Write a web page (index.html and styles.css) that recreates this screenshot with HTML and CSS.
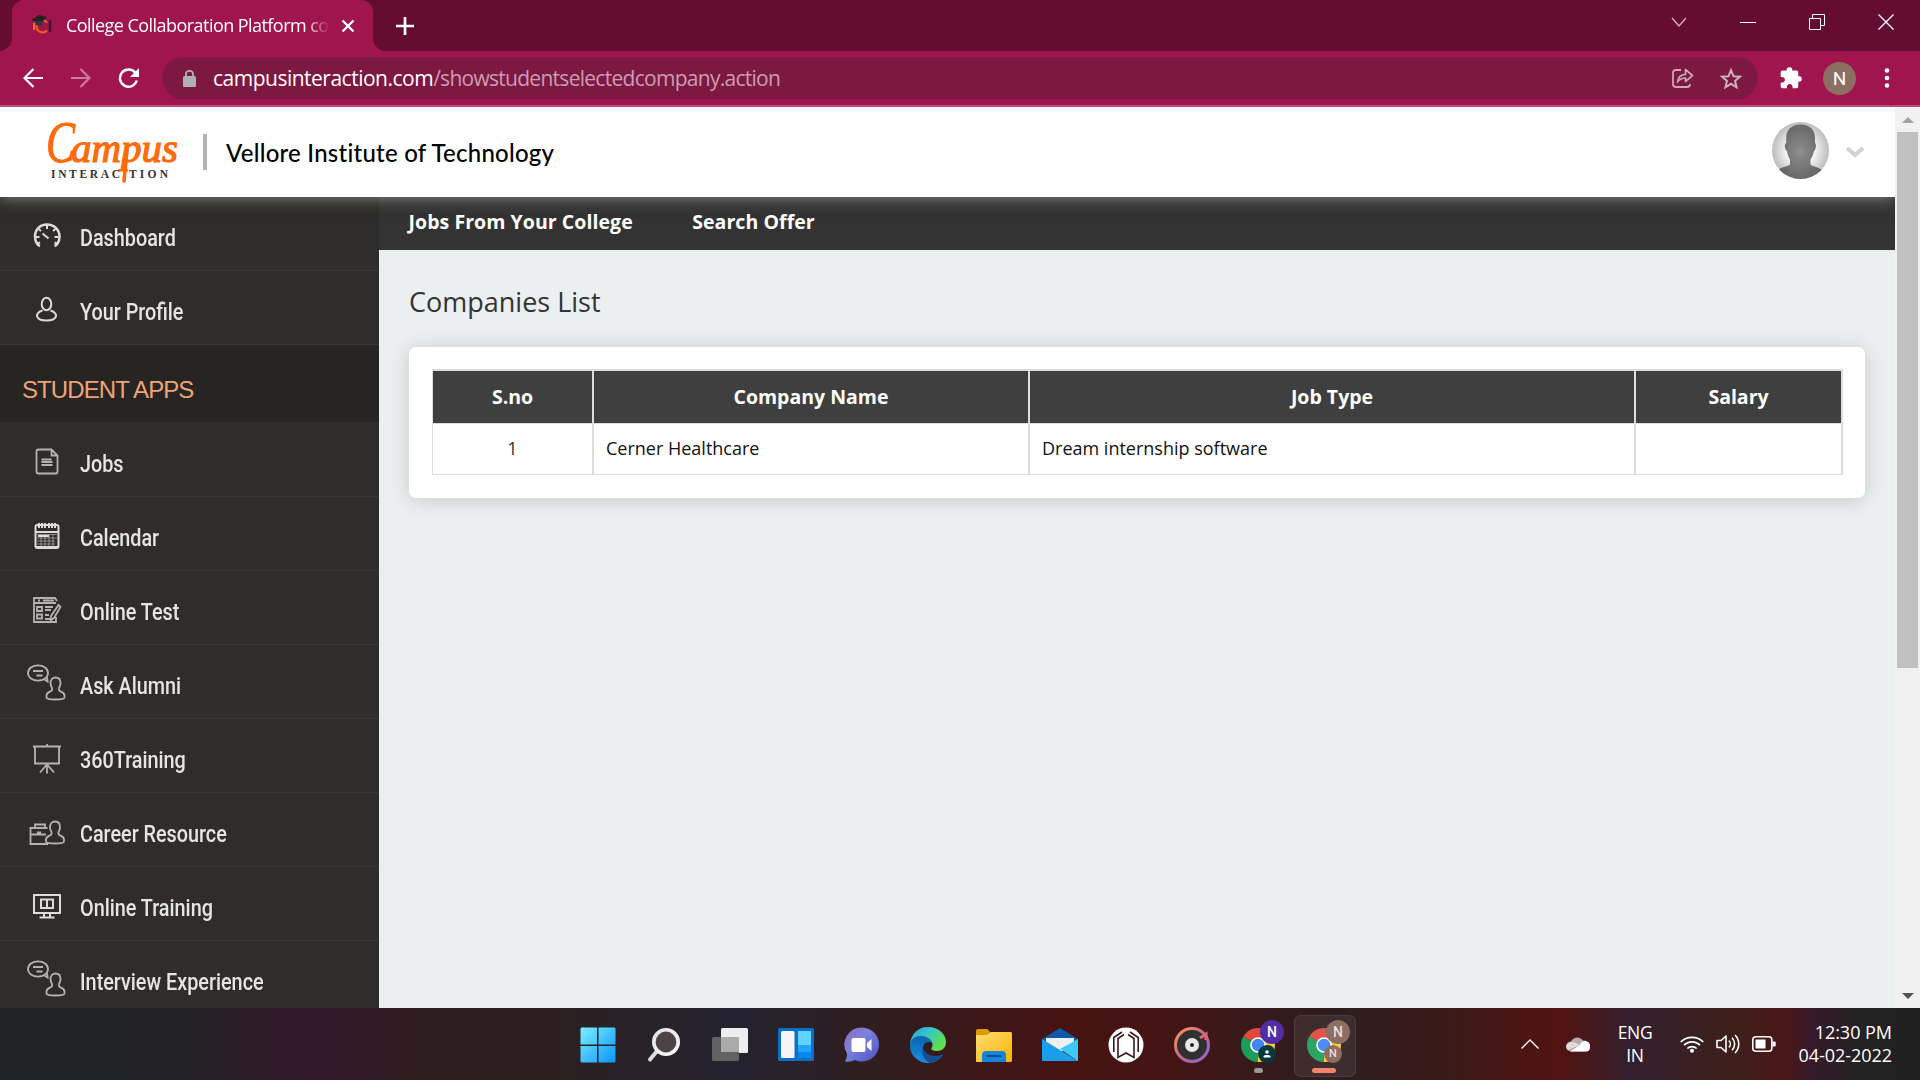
FILE: index.html
```html
<!DOCTYPE html>
<html lang="en">
<head>
<meta charset="utf-8">
<title>College Collaboration Platform</title>
<link rel="stylesheet" href="styles.css">
</head>
<body>
<svg class="defs" width="0" height="0" aria-hidden="true">
  <defs>
    <linearGradient id="winBlue" x1="0" y1="0" x2="1" y2="1"><stop offset="0" stop-color="#7cf0ff"/><stop offset="1" stop-color="#0a94ff"/></linearGradient>
    <linearGradient id="lensRim" x1="0" y1="0" x2="1" y2="1"><stop offset="0" stop-color="#e2e2e2"/><stop offset="1" stop-color="#f8f8f8"/></linearGradient>
    <linearGradient id="chatBg" x1="0" y1="0" x2="1" y2="1"><stop offset="0" stop-color="#8c6bb5"/><stop offset=".4" stop-color="#7b83dd"/><stop offset="1" stop-color="#4c50c4"/></linearGradient>
    <linearGradient id="edgeTop" x1="0" y1="0" x2="1" y2=".5"><stop offset="0" stop-color="#2aa7e0"/><stop offset=".5" stop-color="#34c6c8"/><stop offset="1" stop-color="#62e04c"/></linearGradient>
    <linearGradient id="edgeBody" x1="0" y1="0" x2="0" y2="1"><stop offset="0" stop-color="#0a63b0"/><stop offset="1" stop-color="#1590e0"/></linearGradient>
    <linearGradient id="folder" x1="0" y1="0" x2="1" y2="1"><stop offset="0" stop-color="#ffdd74"/><stop offset="1" stop-color="#f8b500"/></linearGradient>
    <linearGradient id="ring" x1="0" y1="0" x2="1" y2="1"><stop offset="0" stop-color="#ff9a4a"/><stop offset=".5" stop-color="#c06a8c"/><stop offset="1" stop-color="#8a62e0"/></linearGradient>
    <radialGradient id="photo"><stop offset=".4" stop-color="#fff"/><stop offset="1" stop-color="#bdbdbd"/></radialGradient>
    <radialGradient id="figure"><stop offset="0" stop-color="#8c8c8c"/><stop offset="1" stop-color="#696969"/></radialGradient>
    <g id="person"><path d="M10 1c3 0 5 2.200 5 5.500 0 2-.6 3.800-1.500 5v2.200c.8 1.600 5.500 1.800 5.500 5.300v2c0 1.400-4 2-9 2s-9-.6-9-2v-2c0-3.500 4.700-3.700 5.500-5.300v-2.200c-.9-1.200-1.500-3-1.500-5C5 3.200 7 1 10 1z"/></g>
    <g id="askIcon">
      <path d="M17.500 15.500l3 2-.5-5"/><ellipse cx="11" cy="9" rx="10" ry="7.700"/><path d="M6 7h10M9.500 11.500h6"/>
      <use href="#person" x="18.500" y="12.500"/>
    </g>
    <g id="chromeLogo">
      <path d="M17 17 L2.300 8.500 A17 17 0 0 1 31.700 8.500z" fill="#e0483c"/>
      <path d="M17 17 L31.700 8.500 A17 17 0 0 1 17 34z" fill="#fcc934"/>
      <path d="M17 17 L17 34 A17 17 0 0 1 2.300 8.500z" fill="#1a9f5b"/>
      <circle cx="17" cy="17" r="7.800" fill="#fff"/><circle cx="17" cy="17" r="6.200" fill="#4285f4"/>
    </g>
  </defs>
</svg>

<div class="screen">
  <div class="tabstrip">
    <div class="tab">
      <svg class="favicon" width="21" height="22" viewBox="0 0 21 22"><path d="M3 8v7" stroke="#e8721c" stroke-width="2"/><path d="M16 7.500a6 6 0 1 0 0 8" fill="none" stroke="#f0601c" stroke-width="2.200"/><path d="M0 5L8 0l8 2-6 6z" fill="#222"/><path d="M5 6v4l5 1 3-5z" fill="#333"/><path d="M19 5v12" stroke="#3a1726" stroke-width="2.400"/></svg>
      <span class="tab-title">College Collaboration Platform co</span>
      <svg class="tab-close" width="14" height="14" viewBox="0 0 14 14"><path d="M1.500 1.500l11 11m0-11l-11 11" stroke="#fff" stroke-width="2.300"/></svg>
    </div>
    <svg class="newtab" width="18" height="18" viewBox="0 0 18 18"><path d="M9 0v18M0 9h18" stroke="#fff" stroke-width="2.700"/></svg>
    <div class="winbtns">
      <svg width="16" height="16" viewBox="0 0 16 16"><path d="M1 4l7 8 7-8" fill="none" stroke="#d6b8c4" stroke-width="1.200"/></svg>
      <svg width="16" height="16" viewBox="0 0 16 16"><path d="M0 8.500h16" stroke="#fff"/></svg>
      <svg width="16" height="16" viewBox="0 0 16 16"><path d="M.5 4.500h11v11H.5zM3.500 4V.5h12v11h-3.500" fill="none" stroke="#fff"/></svg>
      <svg width="16" height="16" viewBox="0 0 16 16"><path d="M.5.5l15 15m0-15l-15 15" stroke="#fff" stroke-width="1.300"/></svg>
    </div>
  </div>

  <div class="toolbar">
    <svg class="nav-back" width="20" height="20" viewBox="0 0 20 20"><path d="M20 10H1.500M10.500 1L1.500 10l9 9" fill="none" stroke="#fff" stroke-width="2.200"/></svg>
    <svg class="nav-fwd" width="20" height="20" viewBox="0 0 20 20"><path d="M0 10h18.500M9.500 1l9 9-9 9" fill="none" stroke="#cd7ba0" stroke-width="2.200"/></svg>
    <svg class="nav-reload" width="22" height="20" viewBox="0 0 22 20"><path d="M17.500 5A8.600 8.600 0 1 0 18.800 12.500" fill="none" stroke="#fff" stroke-width="2.400"/><path d="M21 0v9h-9z" fill="#fff"/></svg>
    <div class="omnibox">
      <svg width="13" height="17" viewBox="0 0 13 17"><rect y="6" width="13" height="11" rx="1.500" fill="#aeb2b6"/><path d="M3 7V4a3.500 3.200 0 0 1 7 0v3" fill="none" stroke="#aeb2b6" stroke-width="1.800"/></svg>
      <span class="url"><b>campusinteraction.com</b>/showstudentselectedcompany.action</span>
      <svg class="share" width="22" height="20" viewBox="0 0 22 20"><path d="M9 2H4a3 3 0 0 0-3 3v11a3 3 0 0 0 3 3h11a3 3 0 0 0 3-3" fill="none" stroke="#c9a9b7" stroke-width="1.800"/><path d="M5.500 14c.5-5 3-7.500 8-7.700V1.500L20.500 7.500l-7 6V10c-4 0-6 1-8 4z" fill="none" stroke="#c9a9b7" stroke-width="1.700" stroke-linejoin="round"/></svg>
      <svg class="star" width="22" height="21" viewBox="0 0 22 21"><path d="M11 2.200l2.500 6 6.500.5-5 4.200 1.600 6.400L11 15.800l-5.600 3.500L7 12.900 2 8.700l6.500-.5z" fill="none" stroke="#ccb0bc" stroke-width="2"/></svg>
    </div>
    <svg class="puzzle" width="22" height="22" viewBox="0 0 22 22"><path d="M2.500 3.500H7C6 1 8 .2 9.500.2S13 1 12 3.500h4.500a1.800 1.800 0 0 1 1.800 1.800v4.200c2.400-.7 3.500 1 3.500 2.500s-1.100 3.200-3.500 2.500v5a1.800 1.800 0 0 1-1.800 1.800h-4c.5-2.500-.8-4.300-2.800-4.300S6.400 18.800 7 21.300H2.500A1.800 1.800 0 0 1 .7 19.500v-4c2.500.5 4.200-.7 4.200-2.800S3.200 9.600.7 10V5.300a1.800 1.800 0 0 1 1.800-1.800z" fill="#fff"/></svg>
    <span class="profile">N</span>
    <svg class="kebab" width="6" height="20" viewBox="0 0 6 20"><g fill="#fff"><circle cx="3" cy="2.500" r="2.300"/><circle cx="3" cy="10" r="2.300"/><circle cx="3" cy="17.500" r="2.300"/></g></svg>
  </div>

  <div class="viewport">
    <div class="page">
      <header class="site-header">
        <svg class="logo" width="138" height="64" viewBox="0 0 138 64">
          <text y="42"><tspan x="3" class="logo-c" textLength="29" lengthAdjust="spacingAndGlyphs">C</tspan><tspan x="28" class="logo-rest" textLength="107" lengthAdjust="spacingAndGlyphs">ampus</tspan></text>
          <text y="58" class="logo-sub"><tspan x="8" textLength="69">INTERAC</tspan><tspan x="86" textLength="39">TION</tspan></text>
          <path d="M84 30L81 61" stroke="#ff6a0a" stroke-width="3.600" stroke-linecap="round"/>
        </svg>
        <span class="divider"></span>
        <h1 class="college">Vellore Institute of Technology</h1>
        <svg class="avatar" width="57" height="57" viewBox="0 0 57 57"><clipPath id="round"><circle cx="28.500" cy="28.500" r="28.500"/></clipPath><g clip-path="url(#round)"><rect width="57" height="57" fill="url(#photo)"/><path d="M28.500 2.500C38 2.500 43 8 43 16v5c1.700.3 1 7-1 8-.7 4-2.500 7-3.500 8.500v5c2 2 7 2.500 11 5V57H6V47.500c4-2.500 10-3 12-5v-5c-1-1.500-2.500-4.500-3-8.500-2.500-1-3-7.700-.8-8v-5c0-8 5-13.500 14.300-13.500z" fill="url(#figure)"/></g></svg>
        <svg class="caret" width="18" height="12" viewBox="0 0 18 12"><path d="M1 2l8 7 8-7" fill="none" stroke="#d2d2d2" stroke-width="4"/></svg>
      </header>

      <div class="body">
        <nav class="sidebar">
          <a class="item"><svg class="ico" viewBox="0 0 40 40"><path d="M13 30c-1.500-.5-5-3-5-9.500C8 13.500 13 8.500 20 8.500s12.500 5 12.500 12c0 6.500-3.500 9-5 9.500" class="thick"/><path d="M8.500 21h4M31.500 21h-4M20 9v4M11.500 13l2.500 2M28.500 13l-2.500 2M10 27.500l3-1M30.500 27.500l-3-1M15.500 17.500l6 5"/></svg><span>Dashboard</span></a>
          <a class="item"><svg class="ico" viewBox="0 0 40 40"><ellipse cx="19.500" cy="14" rx="4.800" ry="6.200"/><path d="M15.500 20.500c-9 3-6.500 10 4 10s13-7 4-10"/></svg><span>Your Profile</span></a>
          <h2 class="section">STUDENT APPS</h2>
          <a class="item"><svg class="ico dim" viewBox="0 0 40 40"><path d="M24.500 7.500H11.500a2 2 0 0 0-2 2v20a2 2 0 0 0 2 2h17a2 2 0 0 0 2-2v-16zM24.500 7.500v6h6M14.500 17.500h10M14.500 20h11M14.500 23h11"/></svg><span>Jobs</span></a>
          <a class="item"><svg class="ico" viewBox="0 0 40 40"><rect x="8.500" y="9" width="23" height="23" rx="2"/><path d="M9 16h22M9 31h22M11 20h11M12 7v5M15 7v5M18 7v5M22 7v5M25 7v5M28 7v5"/><path class="faint" d="M10 18.500h20M10 22h20M10 25h18M10 28h18M14 18v12M18 18v12M22 18v12M26 18v12"/></svg><span>Calendar</span></a>
          <a class="item"><svg class="ico dim" viewBox="0 0 40 40"><path d="M29 27v5H7V8h21l2 3M7 13h22M11 10.500h2M16 10.500h11M10 17h5v4h-5zM10 24.500h5v4h-5zM18 17h8M18 20h6M18 25h4M18 29h7M31.500 15l2 2-6.500 11-3 2 0-4z"/></svg><span>Online Test</span></a>
          <a class="item"><svg class="ico dim" viewBox="0 0 40 40"><use href="#askIcon"/></svg><span>Ask Alumni</span></a>
          <a class="item"><svg class="ico dim" viewBox="0 0 40 40"><path d="M6 8.500h28M8 9v16.500h24V9M20 6v2.500M20 26v9.500M19.500 27L13 34.500M20.500 27L27 34.500"/></svg><span>360Training</span></a>
          <a class="item"><svg class="ico dim" viewBox="0 0 40 40"><path d="M21 32H3.500V16h17M3.500 22.500H19M8 15.500v-3h10v3M10 20.500h4"/><use href="#person" x="18" y="8.500"/></svg><span>Career Resource</span></a>
          <a class="item"><svg class="ico" viewBox="0 0 40 40"><path d="M7 9h26v18H7zM14 13.500h12v8.500H14zM20 13.500v8.500M17 27v4M23 27v4M12.500 31.500h15"/></svg><span>Online Training</span></a>
          <a class="item"><svg class="ico dim" viewBox="0 0 40 40"><use href="#askIcon"/></svg><span>Interview Experience</span></a>
        </nav>

        <main class="main">
          <div class="menu"><a class="jobs-link">Jobs From Your College</a><a class="offer-link">Search Offer</a></div>
          <h2 class="heading">Companies List</h2>
          <section class="card">
            <table class="companies">
              <colgroup><col class="c-no"><col class="c-name"><col class="c-type"><col class="c-salary"></colgroup>
              <thead><tr><th>S.no</th><th>Company Name</th><th>Job Type</th><th>Salary</th></tr></thead>
              <tbody><tr><td class="num">1</td><td>Cerner Healthcare</td><td>Dream internship software</td><td></td></tr></tbody>
            </table>
          </section>
        </main>
      </div>
    </div>
    <div class="scrollbar">
      <svg width="12" height="6" viewBox="0 0 12 6"><path d="M0 6l6-6 6 6z" fill="#a3a3a3"/></svg>
      <div class="thumb"></div>
      <svg class="down" width="12" height="6" viewBox="0 0 12 6"><path d="M0 0h12L6 6z" fill="#505050"/></svg>
    </div>
  </div>

  <footer class="taskbar">
    <div class="apps">
      <span class="app"><svg width="36" height="36" viewBox="0 0 36 36"><path d="M1.500.5H17v17H.5v-16zM18.500.5h16l1 1v16h-17zM.5 19H17v16.500H1.500l-1-1zM18.500 19h17v15.500l-1 1h-16z" fill="url(#winBlue)"/></svg></span>
      <span class="app"><svg width="36" height="36" viewBox="0 0 36 36"><path d="M11.500 23.500L4 32.500" stroke="#dcdcdc" stroke-width="4" stroke-linecap="round"/><circle cx="20" cy="15" r="12.200" fill="#4d4347" stroke="url(#lensRim)" stroke-width="3.600"/></svg></span>
      <span class="app"><svg width="36" height="36" viewBox="0 0 36 36"><rect x="9" y="1" width="27" height="25" rx="1.500" fill="#eee"/><rect y="10" width="27" height="24" rx="1.500" fill="#626262"/><path d="M9 10h18v15H9z" fill="#aaa"/></svg></span>
      <span class="app"><svg width="36" height="36" viewBox="0 0 36 36"><rect y="1" width="36" height="33" rx="1.500" fill="#0c6fc4"/><rect x="3" y="4" width="13.500" height="27" rx="1.500" fill="#f5f5f5"/><path d="M20 4h13v14H20z" fill="#62d3ff"/><path d="M20 18h13v7H20z" fill="#21a5fa"/><path d="M20 25h13v6H20z" fill="#0786ee"/></svg></span>
      <span class="app"><svg width="36" height="36" viewBox="0 0 36 36"><path d="M18 .5a17 17 0 1 1-7 32.500c-3 1.500-6 2-10 1.500 1.500-2.500 2-5 2-8A17 17 0 0 1 18 .5z" fill="url(#chatBg)"/><rect x="7.500" y="11" width="14" height="14" rx="2" fill="#fff"/><path d="M23 16l4.500-4v12L23 20z" fill="#fff"/></svg></span>
      <span class="app"><svg width="36" height="36" viewBox="0 0 36 36"><path d="M0 17C1 7 8 0 18 0c11 0 18 7.500 18 15 0 6-4 9-9 9-4 0-6.500-1.500-5.500-3 1.500-2 1.500-5-.5-7z" fill="url(#edgeTop)"/><path d="M0 18C1 11 6 9 11 9c6 0 10.500 3.500 11 7-6-3-10 2-9 7 1 6 8 10 20 4.500C30 33 24.500 36 18 36 8 36-.5 28 0 18z" fill="url(#edgeBody)"/><path d="M13 20c-2 7 1 13 7 16 6-.5 10.500-4 13-8.500-8 3-18 1.500-20-7.500z" fill="#124f91"/></svg></span>
      <span class="app"><svg width="36" height="36" viewBox="0 0 36 36"><path d="M0 4a2 2 0 0 1 2-2h9.500L15 6v6H0z" fill="#dd9b00"/><path d="M0 8h11l4-3h20l1 1v28l-1 1H0z" fill="url(#folder)"/><path d="M6 35v-7a4 4 0 0 1 4-4h16a4 4 0 0 1 4 4v7z" fill="#1583d8"/><path d="M11.500 29h13" stroke="#094d91" stroke-width="2" stroke-linecap="round"/></svg></span>
      <span class="app"><svg width="36" height="36" viewBox="0 0 36 36"><path d="M0 12L18 1l18 11v8H0z" fill="#0b59a8"/><path d="M4 11h28v9L18 25 4 17z" fill="#f0f0f0"/><path d="M0 12l36 22H0z" fill="#1b9ee9"/><path d="M36 12v22L18 22z" fill="#3ccbf4"/></svg></span>
      <span class="app"><svg width="36" height="36" viewBox="0 0 36 36"><circle cx="18" cy="18" r="17.500" fill="#fff"/><g fill="none" stroke="#3b191a" stroke-width="1.600"><path d="M14 5L5.800 10.500V25M22 5l8.200 5.500V25"/><path d="M16 7.500L10 11.500V30.500L18 26l8 4.500V11.500L20 7.500"/></g></svg></span>
      <span class="app"><svg width="36" height="36" viewBox="0 0 36 36"><circle cx="18" cy="18" r="16.500" fill="#303030" stroke="url(#ring)" stroke-width="3"/><circle cx="18" cy="18" r="7" fill="#e8e8e8"/><circle cx="18" cy="18" r="2" fill="#222"/><path d="M26 11l6-4v6" fill="none" stroke="#d9697a" stroke-width="3"/></svg></span>
      <span class="app chrome"><svg width="34" height="34" viewBox="0 0 34 34"><use href="#chromeLogo"/></svg><i class="badge violet">N</i><i class="badge small teal"><svg width="8" height="8" viewBox="0 0 8 8"><circle cx="4" cy="2" r="1.800" fill="#fff"/><path d="M.5 7.500V6C1 4.500 7 4.500 7.500 6v1.500z" fill="#fff"/></svg></i><i class="mark"></i></span>
      <span class="app chrome active"><svg width="34" height="34" viewBox="0 0 34 34"><use href="#chromeLogo"/></svg><i class="badge brown">N</i><i class="badge small brown">N</i><i class="mark wide"></i></span>
    </div>
    <div class="tray">
      <svg width="18" height="10" viewBox="0 0 18 10"><path d="M.5 9.500L9 1l8.500 8.500" fill="none" stroke="#fff" stroke-width="1.400"/></svg>
      <svg class="cloud" width="24" height="16" viewBox="0 0 24 16"><path d="M5 15.500a5 5 0 0 1 0-10A7 7 0 0 1 17 4.500a5.500 5.500 0 0 1 2 11z" fill="#b9aaab"/><path d="M4 15.500L14 9a5 5 0 0 1 10 2.500 4 4 0 0 1-4 4H4z" fill="#fff"/><path d="M2 14c-3-2-2-7 3-8 4 0 7 2 9 3z" fill="#ddd"/></svg>
      <span class="lang">ENG<br>IN</span>
      <svg class="wifi" width="24" height="18" viewBox="0 0 24 18"><g fill="none" stroke="#fff" stroke-width="1.700"><path d="M.7 7a16 16 0 0 1 22.600 0M4 10.200a11.300 11.300 0 0 1 16 0M7.300 13.500a6.600 6.600 0 0 1 9.400 0"/></g><circle cx="12" cy="15.700" r="2" fill="#fff"/></svg>
      <svg class="speaker" width="24" height="20" viewBox="0 0 24 20"><g fill="none" stroke="#fff" stroke-width="1.600" stroke-linejoin="round"><path d="M1 6.500h4L10 2v16l-5-4.500H1zM13 6.500c1.800 2 1.800 5 0 7M16 3.800c3.500 3.500 3.500 9 0 12.400M19 1c5 5 5 13 0 18"/></g></svg>
      <svg class="battery" width="24" height="16" viewBox="0 0 24 16"><rect x=".8" y=".8" width="19" height="14.400" rx="3" fill="none" stroke="#fff" stroke-width="1.600"/><rect x="3.500" y="3.500" width="10" height="9" fill="#fff"/><path d="M20.500 5.500h2a1.200 1.200 0 0 1 1.200 1.200v2.600a1.200 1.200 0 0 1-1.200 1.200h-2z" fill="#fff"/></svg>
      <span class="clock">12:30 PM<br>04-02-2022</span>
    </div>
  </footer>
</div>
</body>
</html>
```

FILE: styles.css
```css
* { box-sizing: border-box; }
body { margin: 0; overflow: hidden; font-family: "Open Sans", "Noto Sans", sans-serif; }
svg { display: block; flex: none; }
.defs { position: absolute; }
.screen { width: 1920px; height: 1080px; display: flex; flex-direction: column; }

/* browser window */
.tabstrip { height: 51px; background: #640d30; display: flex; align-items: center; padding-left: 12px; }
.tab { position: relative; width: 361px; height: 51px; background: #a1154e; border-radius: 12px 12px 0 0; display: flex; align-items: center; padding-left: 19px; }
.tab::before, .tab::after { content: ""; position: absolute; bottom: 0; width: 12px; height: 12px; }
.tab::before { left: -12px; background: radial-gradient(circle at 0 0, transparent 11.500px, #a1154e 12px); }
.tab::after { right: -12px; background: radial-gradient(circle at 100% 0, transparent 11.500px, #a1154e 12px); }
.tab-title { margin-left: 14px; width: 263px; overflow: hidden; white-space: nowrap; font-size: 18px; line-height: 24px; padding-bottom: 1px; letter-spacing: -.55px; color: #fff; -webkit-mask-image: linear-gradient(90deg, #000 238px, transparent 264px); mask-image: linear-gradient(90deg, #000 238px, transparent 264px); }
.tab-close { margin-left: 12px; }
.newtab { margin-left: 23px; }
.winbtns { margin-left: auto; padding: 0 26px 8px 0; display: flex; gap: 53px; }
.toolbar { height: 56px; background: #a1154e; border-bottom: 2px solid #bf4a78; display: flex; align-items: center; padding-left: 23px; }
.nav-fwd { margin-left: 28px; }
.nav-reload { margin-left: 27px; }
.omnibox { margin-left: 22px; width: 1596px; height: 42px; border-radius: 21px; background: #7d1842; display: flex; align-items: center; padding-left: 21px; }
.url { margin-left: 17px; font-size: 21px; line-height: 40px; letter-spacing: -.72px; color: #cc9db1; white-space: nowrap; }
.url b { font-weight: 400; color: #fff; letter-spacing: -.5px; }
.share { margin-left: auto; }
.star { margin: 0 16px 0 26px; }
.puzzle { margin-left: 22px; }
.profile { margin-left: 21px; width: 33px; height: 33px; border-radius: 50%; background: #8d6e63; color: #fff; font: 19px/33px Roboto, sans-serif; text-align: center; }
.kebab { margin-left: 28px; }
.viewport { height: 901px; display: flex; overflow: hidden; }
.page { width: 1895px; display: flex; flex-direction: column; overflow: hidden; }
.scrollbar { width: 25px; background: #f1f1f1; display: flex; flex-direction: column; align-items: center; padding: 10px 0 9px; }
.thumb { width: 21px; height: 536px; margin-top: 9px; background: #c1c1c1; }
.down { margin-top: auto; }

/* site header */
.site-header { position: relative; z-index: 1; height: 90px; flex: none; background: #fff; box-shadow: 0 1px 14px rgba(175, 180, 175, .65); display: flex; align-items: center; padding-left: 43px; }
.logo { overflow: visible; }
.logo-c { font: italic 59px "Liberation Serif", serif; fill: #ff6a0a; stroke: #ff6a0a; }
.logo-rest { font: italic 39px "Liberation Serif", serif; fill: #ff6a0a; stroke: #ff6a0a; stroke-width: 1.200px; }
.logo-sub { font: bold 11.500px "Liberation Serif", serif; fill: #333; }
.divider { margin-left: 22px; width: 4px; height: 36px; background: #b4b4b4; }
.college { margin: 2px 0 0 19px; font: 500 24px/36px "Lato", sans-serif; letter-spacing: .23px; color: #000; white-space: nowrap; }
.avatar { margin: -4px 0 0 auto; }
.caret { margin: 0 31px 0 17px; }

/* sidebar */
.body { flex: 1; min-height: 0; display: flex; }
.sidebar { width: 379px; background: #2e2d2b; overflow: hidden; }
.item { height: 74px; border-bottom: 1px solid #373735; display: flex; align-items: center; padding-left: 27px; color: #e6e5e2; font: 500 24px/30px Roboto, sans-serif; }
.item span { margin: 9px 0 0 12.500px; transform: scaleX(.825); transform-origin: 0 50%; white-space: nowrap; }
.ico { width: 40px; height: 40px; margin-top: 5px; fill: none; stroke: #dddcd9; stroke-width: 2; overflow: visible; }
.ico .thick { stroke-width: 2.500; }
.ico .faint { stroke-width: 1; opacity: .5; }
.dim { stroke: #b4b3b0; stroke-width: 1.800; }
.section { margin: 0; height: 78px; background: #262523; border-bottom: 1px solid #2e2d2b; color: #f0a473; font: 24px/90px "Liberation Sans", sans-serif; padding-left: 22px; letter-spacing: -.9px; }

/* main column */
.main { flex: 1; background: #ebeff0; }
.menu { height: 53px; background: #333; color: #fff; display: flex; padding-left: 29.500px; font-size: 19.500px; line-height: 50px; font-weight: 700; white-space: nowrap; }
.offer-link { margin-left: 59.500px; }
.jobs-link, .offer-link { letter-spacing: .06px; }
.heading { margin: 33px 0 0 30px; font-size: 27px; line-height: 38px; font-weight: 400; color: #333; }
.card { margin: 26px 30px 0; height: 151px; border-radius: 7px; background: #fff; box-shadow: 0 2px 20px rgba(0, 0, 0, .16); padding: 22px 22px 0 23px; }
.companies { width: 1411px; table-layout: fixed; border-collapse: separate; border-spacing: 0; border-top: 2px solid #ddd; border-left: 1px solid #ddd; }
.c-no { width: 161px; }
.c-name { width: 436px; }
.c-type { width: 606px; }
.c-salary { width: 207px; }
.companies th, .companies td { border-right: 2px solid #ddd; border-bottom: 1px solid #ddd; padding: 0 12px 2px; white-space: nowrap; }
.companies th { height: 53px; background: #3f3f3f; color: #fff; font-size: 19.500px; font-weight: 700; }
.companies td { height: 51px; font-size: 18px; color: #111; text-align: left; }
.companies .num { text-align: center; color: #333; }

/* taskbar */
.taskbar { height: 72px; display: flex; color: #fff; background: linear-gradient(90deg, #202226 0, #222225 180px, #33172c 315px, #2e1c1e 420px, #2b2022 570px, #242330 735px, #301d1f 880px, #461212 1060px, #451414 1160px, #351a1b 1270px, #2e1e20 1340px, #3b1a17 1450px, #521212 1560px, #33202e 1630px, #3d1f1a 1735px, #4b1618 1785px, #37192a 1810px, #222 1860px, #202020 1920px); }
.apps { display: flex; padding-left: 565px; }
.app { position: relative; width: 66px; height: 72px; display: flex; justify-content: center; padding-top: 19px; }
.chrome { padding-top: 20px; }
.active::before { content: ""; position: absolute; left: 3px; top: 7px; width: 60px; height: 60px; border-radius: 7px; background: rgba(255, 255, 255, .07); border: 1px solid rgba(255, 255, 255, .08); }
.badge { position: absolute; left: 35px; top: 12px; width: 24px; height: 24px; border-radius: 50%; font: 500 14px/24px Roboto, sans-serif; text-align: center; color: #fff; }
.small { left: 33px; top: 37px; width: 18px; height: 18px; font-size: 11px; line-height: 18px; display: flex; align-items: center; justify-content: center; }
.violet { background: #512da8; }
.teal { background: #05393f; }
.brown { background: #8d6e63; color: #e8ded9; }
.mark { position: absolute; left: 29px; bottom: 7px; width: 9px; height: 5px; border-radius: 3px; background: #9c9596; }
.wide { left: 21px; width: 24px; background: #f4846a; }
.tray { margin-left: auto; padding-right: 28px; display: flex; align-items: center; font-size: 18px; line-height: 23px; letter-spacing: -.4px; white-space: nowrap; }
.cloud { margin-left: 27px; }
.lang { width: 60px; margin-left: 15px; text-align: center; font-size: 17.500px; }
.wifi { margin-left: 15px; }
.speaker, .battery { margin-left: 12px; }
.clock { width: 96px; margin-left: 20px; display: flex; justify-content: flex-end; text-align: right; letter-spacing: -.03px; }
```
